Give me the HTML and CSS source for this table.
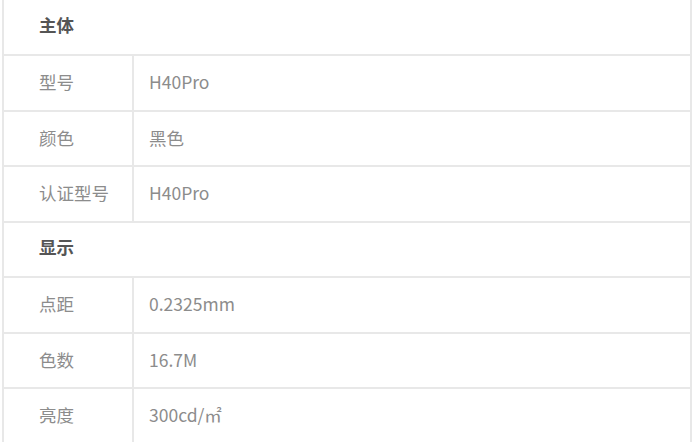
FILE: index.html
```html
<!DOCTYPE html>
<html lang="zh">
<head>
<meta charset="utf-8">
<link rel="stylesheet" href="styles.css">
</head>
<body>
<div class="spec">
  <div class="row head"><div class="title">主体</div></div>
  <div class="row"><div class="label">型号</div><div class="value">H40Pro</div></div>
  <div class="row"><div class="label">颜色</div><div class="value">黑色</div></div>
  <div class="row"><div class="label">认证型号</div><div class="value">H40Pro</div></div>
  <div class="row head"><div class="title">显示</div></div>
  <div class="row"><div class="label">点距</div><div class="value">0.2325mm</div></div>
  <div class="row"><div class="label">色数</div><div class="value">16.7M</div></div>
  <div class="row"><div class="label">亮度</div><div class="value">300cd/㎡</div></div>
</div>
</body>
</html>
```
FILE: styles.css
```css
html, body {
  margin: 0;
  padding: 0;
  background: #fff;
  overflow: hidden;
}
body {
  font-family: "Noto Sans CJK SC", "Noto Sans", sans-serif;
  font-size: 17.5px;
}
.spec {
  margin-left: 2px;
  width: 690px;
  box-sizing: border-box;
  border-left: 2px solid #e8e8e8;
  border-right: 2px solid #e8e8e8;
}
.row {
  display: grid;
  grid-template-columns: 130px 1fr;
  height: 53.5px;
  border-bottom: 2px solid #e8e8e8;
}
.row:first-child {
  height: 54px;
}
.head {
  display: flex;
  align-items: center;
}
.title {
  padding-left: 35px;
  font-weight: 700;
  color: #555;
  margin-top: -6px;
}
.label {
  display: flex;
  align-items: center;
  padding-left: 35px;
  padding-bottom: 2px;
  color: #8c8c8c;
  border-right: 2px solid #e8e8e8;
}
.value {
  display: flex;
  align-items: center;
  padding-left: 15px;
  padding-bottom: 2px;
  color: #8c8c8c;
}
```
